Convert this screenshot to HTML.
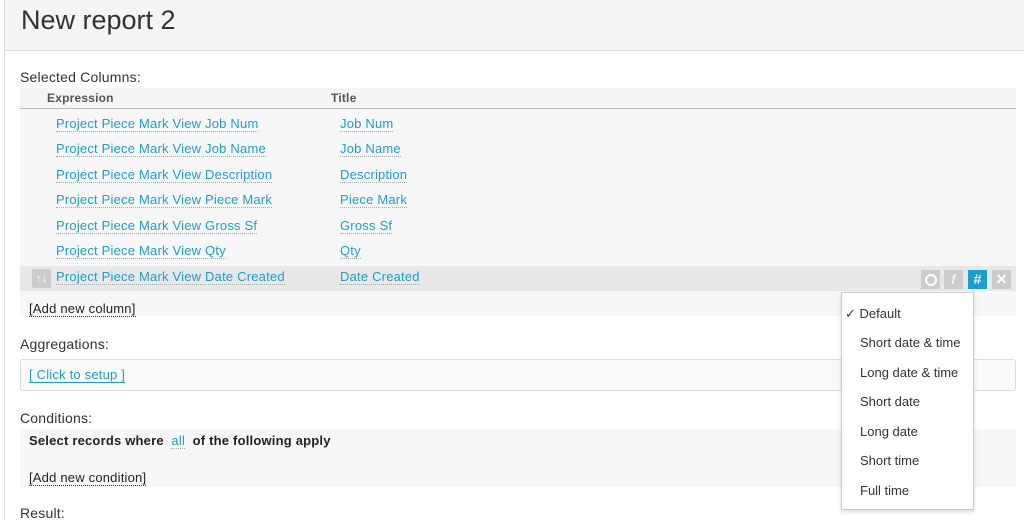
<!DOCTYPE html>
<html><head><style>
body{margin:0;width:1024px;height:519px;overflow:hidden;background:#fff;font-family:"Liberation Sans",sans-serif;position:relative;color:#333}
.hdr{position:absolute;left:4px;top:0;width:1020px;height:50px;background:#f5f5f5;border-bottom:1px solid #ddd}
.hdr span{position:absolute;left:17px;top:5px;font-size:27px;color:#333}
.lb{position:absolute;left:4px;top:0;width:1px;height:519px;background:#ddd}
.a{position:absolute;font-size:13px;letter-spacing:0.2px}
.lk{color:#1a9fd0;border-bottom:1px dotted #aaa}
.row{position:absolute;left:20px;width:996px}
.btn{position:absolute;top:270px;width:19px;height:19px;background:#ccc;color:#fff;font-size:14px;font-weight:bold;text-align:center;line-height:19px}
.dd{position:absolute;left:841px;top:292px;width:131px;height:216px;background:#fff;border:1px solid #ccc;box-shadow:0 2px 4px rgba(0,0,0,.15)}
.dd div{position:absolute;left:18px;font-size:13px;color:#333}
</style></head><body>
<div class="hdr"><span>New report 2</span></div>
<div class="lb"></div>
<div class="a" style="left:20px;top:69px;font-size:14px">Selected Columns:</div>
<div class="row" style="top:88px;height:20px;background:#f5f5f5;border-bottom:1px solid #bbb"></div>
<div class="a" style="left:47px;top:91px;font-size:12px;font-weight:bold;color:#555">Expression</div>
<div class="a" style="left:331px;top:91px;font-size:12px;font-weight:bold;color:#555">Title</div>
<div class="row" style="top:109px;height:157px;background:#f7f7f7"></div>
<div class="row" style="top:266px;height:25px;background:#e8e8e8"></div>
<div class="row" style="top:291px;height:25px;background:#f7f7f7"></div>
<div style="position:absolute;left:32px;top:269px;width:19px;height:19px;background:#ccc;border-radius:2px;color:#fff;font-size:12px;font-weight:bold;text-align:center;line-height:19px">↑↓</div>
<div class="a" style="left:56px;top:116px"><span class="lk">Project Piece Mark View Job Num</span></div>
<div class="a" style="left:56px;top:141px"><span class="lk">Project Piece Mark View Job Name</span></div>
<div class="a" style="left:56px;top:167px"><span class="lk">Project Piece Mark View Description</span></div>
<div class="a" style="left:56px;top:192px"><span class="lk">Project Piece Mark View Piece Mark</span></div>
<div class="a" style="left:56px;top:218px"><span class="lk">Project Piece Mark View Gross Sf</span></div>
<div class="a" style="left:56px;top:243px"><span class="lk">Project Piece Mark View Qty</span></div>
<div class="a" style="left:56px;top:269px"><span class="lk">Project Piece Mark View Date Created</span></div>
<div class="a" style="left:340px;top:116px"><span class="lk">Job Num</span></div>
<div class="a" style="left:340px;top:141px"><span class="lk">Job Name</span></div>
<div class="a" style="left:340px;top:167px"><span class="lk">Description</span></div>
<div class="a" style="left:340px;top:192px"><span class="lk">Piece Mark</span></div>
<div class="a" style="left:340px;top:218px"><span class="lk">Gross Sf</span></div>
<div class="a" style="left:340px;top:243px"><span class="lk">Qty</span></div>
<div class="a" style="left:340px;top:269px"><span class="lk">Date Created</span></div>
<div class="btn" style="left:921px"><span style="display:inline-block;width:8px;height:8px;border:2px solid #fff;border-radius:50%;vertical-align:-2px"></span></div>
<div class="btn" style="left:944px;font-style:italic;font-weight:normal">f</div>
<div class="btn" style="left:968px;background:#1a9fd0">#</div>
<div class="btn" style="left:992px">✕</div>
<div class="a" style="left:29px;top:301px;color:#222"><span style="border-bottom:1px dotted #333">[Add new column]</span></div>
<div class="a" style="left:20px;top:336px;font-size:14px">Aggregations:</div>
<div style="position:absolute;left:20px;top:359px;width:994px;height:30px;border:1px solid #ddd;border-radius:3px;background:#fafafa"></div>
<div class="a" style="left:29px;top:367px"><span class="lk" style="border-bottom:1px solid #1a9fd0">[ Click to setup ]</span></div>
<div class="a" style="left:20px;top:410px;font-size:14px">Conditions:</div>
<div class="row" style="top:429px;height:58px;background:#f7f7f7"></div>
<div class="a" style="left:29px;top:433px;font-weight:bold;color:#222">Select records where &nbsp;<span class="lk" style="font-weight:normal">all</span>&nbsp; of the following apply</div>
<div class="a" style="left:29px;top:470px;color:#222"><span style="border-bottom:1px dotted #333">[Add new condition]</span></div>
<div class="a" style="left:20px;top:505px;font-size:14px">Result:</div>
<div class="dd">
<div style="left:3px;top:13px">✓ Default</div>
<div style="top:42px">Short date &amp; time</div>
<div style="top:72px">Long date &amp; time</div>
<div style="top:101px">Short date</div>
<div style="top:131px">Long date</div>
<div style="top:160px">Short time</div>
<div style="top:190px">Full time</div>
</div>
</body></html>
